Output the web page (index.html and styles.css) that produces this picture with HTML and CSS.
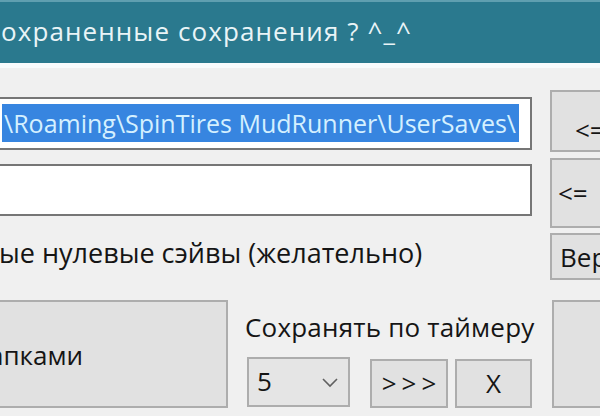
FILE: index.html
```html
<!DOCTYPE html>
<html lang="ru">
<head>
<meta charset="utf-8">
<title>Сохранения</title>
<link rel="stylesheet" href="styles.css">
</head>
<body>
<div class="window">
  <div class="titlebar"><span class="title-text">охраненные сохранения ? ^_^</span></div>
  <div class="title-sep"></div>
  <div class="content">
    <div class="top">
      <div class="left-col">
        <div class="textbox tb1"><span class="sel">\Roaming\SpinTires MudRunner\UserSaves\</span></div>
        <div class="textbox tb2"></div>
        <div class="check-label">ые нулевые сэйвы (желательно)</div>
      </div>
      <div class="right-col">
        <div class="btn rb1"><span>&lt;=</span></div>
        <div class="btn rb2"><span>&lt;=</span></div>
        <div class="btn rb3"><span>Вер</span></div>
      </div>
    </div>
    <div class="bottom">
      <div class="btn big-left"><span class="big-left-text">апками</span></div>
      <div class="timer">
        <div class="timer-label">Сохранять по таймеру</div>
        <div class="timer-row">
          <div class="combo"><span class="combo-val">5</span><svg class="chev" width="16" height="10" viewBox="0 0 16 10"><polyline points="1,1 8,8 15,1" fill="none" stroke="#606060" stroke-width="1.6"/></svg></div>
          <div class="btn small go"><span>&gt;&gt;&gt;</span></div>
          <div class="btn small stop"><span>X</span></div>
        </div>
      </div>
      <div class="btn big-right"></div>
    </div>
  </div>
</div>
</body>
</html>
```
FILE: styles.css
```css
html, body {
  margin: 0;
  padding: 0;
  background: #f0f0f0;
}
body {
  width: 600px;
  height: 416px;
  overflow: hidden;
  font-family: "Open Sans", "Noto Sans", "DejaVu Sans", sans-serif;
  color: #151515;
}
.window {
  width: 600px;
  height: 416px;
  overflow: hidden;
}
.titlebar {
  height: 57px;
  background: #2a798e;
  border-top: 2px solid #5f9fb0;
  display: flex;
  align-items: center;
  padding-left: 1px;
  padding-bottom: 4px;
}
.title-text {
  color: #e9f4f7;
  font-size: 26px;
  letter-spacing: 1.1px;
  white-space: nowrap;
}
.title-sep {
  height: 5px;
  background: #f8fbfc;
}
.content {
  display: flex;
  flex-direction: column;
}
.top {
  display: flex;
  height: 232px;
  gap: 18px;
}
.left-col {
  flex: 0 0 537px;
  margin-left: -5px;
  display: flex;
  flex-direction: column;
}
.textbox {
  height: 48px;
  border: 2px solid #767676;
  background: #fff;
  display: flex;
  align-items: center;
  padding-left: 5px;
  font-size: 25px;
  white-space: nowrap;
  overflow: hidden;
}
.tb1 {
  margin-top: 29px;
  height: 47px;
  padding-bottom: 2px;
}
.tb2 {
  margin-top: 14px;
}
.sel {
  background: #3785e0;
  color: #d4f0ff;
  height: 38px;
  line-height: 38px;
  padding: 0 3px 0 2px;
}
.check-label {
  font-size: 27px;
  margin-top: 18px;
  white-space: nowrap;
  padding-left: 4px;
}
.right-col {
  flex: 0 0 70px;
  display: flex;
  flex-direction: column;
}
.btn {
  background: #e1e1e1;
  border: 2px solid #adadad;
  box-sizing: border-box;
  font-size: 26px;
  display: flex;
  align-items: center;
  white-space: nowrap;
  overflow: hidden;
  flex-shrink: 0;
}
.rb1 {
  margin-top: 22px;
  height: 62px;
  padding-left: 23px;
  padding-top: 18px;
}
.rb2 {
  margin-top: 6px;
  height: 70px;
  padding-left: 6px;
}
.rb3 {
  margin-top: 5px;
  height: 47px;
  padding-left: 8px;
}
.bottom {
  display: flex;
  height: 108px;
  gap: 17px;
}
.big-left {
  width: 233px;
  margin-left: -5px;
  height: 108px;
}
.big-left-text {
  margin-left: -8px;
  padding-top: 2px;
}
.timer {
  flex: 0 0 288px;
  display: flex;
  flex-direction: column;
}
.timer-label {
  font-size: 26px;
  margin-top: 9px;
  height: 36px;
  line-height: 36px;
  white-space: nowrap;
  letter-spacing: 0.2px;
}
.timer-row {
  display: flex;
  align-items: flex-end;
  margin-top: auto;
  gap: 7px;
}
.combo {
  flex: 0 0 103px;
  height: 50px;
  margin-left: 2px;
  margin-right: 13px;
  margin-bottom: 1px;
  background: #e5e5e5;
  border: 2px solid #adadad;
  box-sizing: border-box;
  display: flex;
  align-items: center;
  justify-content: space-between;
  padding: 0 10px 2px 8px;
  font-size: 26px;
}
.chev {
  margin-top: 4px;
}
.small {
  width: 78px;
  height: 49px;
  justify-content: center;
  padding-bottom: 2px;
}
.go span {
  letter-spacing: 5px;
  margin-right: -5px;
}
.stop {
  width: 77px;
}
.big-right {
  width: 70px;
  height: 108px;
}
```
